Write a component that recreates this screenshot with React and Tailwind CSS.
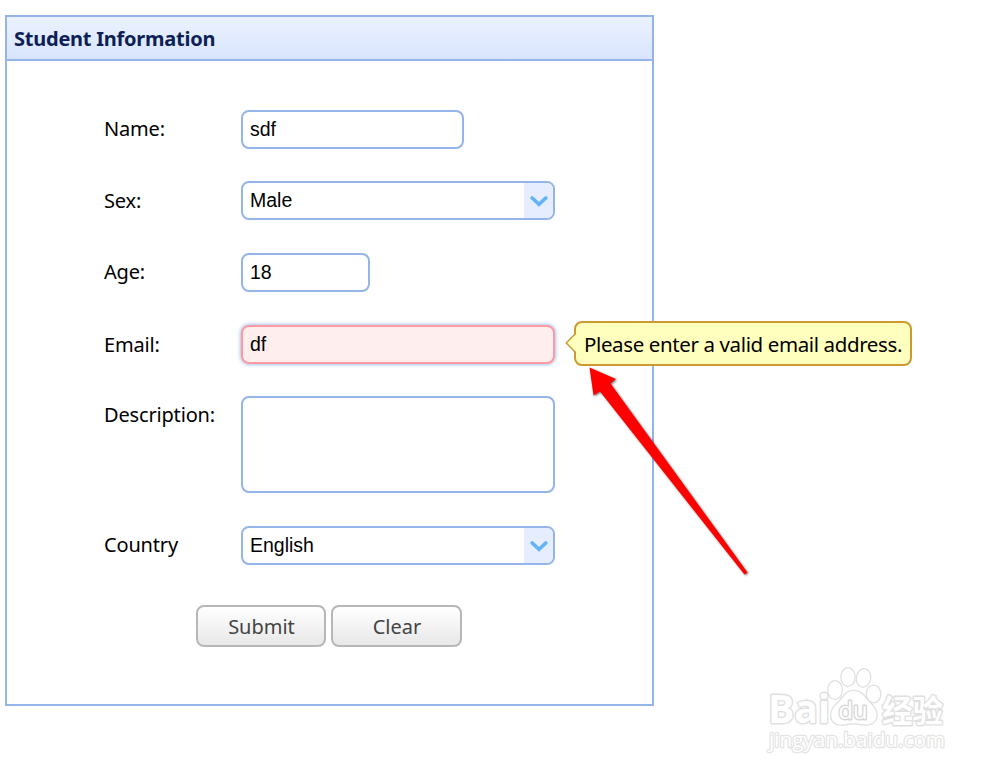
import { useState } from 'react';

const inputClass =
  'block border-2 border-[#94b4ea] rounded-[8px] bg-white pl-[7px] text-[19.5px] text-black font-["Liberation_Sans",Arial,sans-serif] outline-none';

function Row({ label, className = '', labelClass = 'leading-[38px]', children }) {
  return (
    <div className={`flex items-start ${className}`}>
      <label className={`w-[137px] shrink-0 whitespace-nowrap tracking-[-0.17px] ${labelClass}`}>{label}</label>
      {children}
    </div>
  );
}

function Combo({ value }) {
  return (
    <div className={`${inputClass} flex w-[314px] h-[39px] overflow-hidden`}>
      <span className="flex-1 leading-[35px]">{value}</span>
      <button type="button" className="w-[29px] h-full bg-[#e5edfe] flex items-center justify-center">
        <svg width="18" height="12" viewBox="0 0 18 12" fill="none" className="mt-[2px]">
          <path d="M2.2 2 L9 8.4 L15.8 2" stroke="#63b3f5" strokeWidth="3.6" strokeLinecap="round" />
        </svg>
      </button>
    </div>
  );
}

function ErrorTip({ text }) {
  return (
    <div className="absolute left-[333px] -top-[4px] h-[45px] w-[338px] rounded-[8px] border-2 border-[#cc9933] bg-[#ffffbe] pl-[8px] leading-[42px] whitespace-nowrap text-[20.5px] tracking-[-0.38px]">
      <svg width="12" height="22" viewBox="0 0 12 22" className="absolute -left-[11px] top-[9px]">
        <path d="M12 1 L1.5 11 L12 21 Z" fill="#ffffbe" />
        <path d="M10.5 1.5 L1.2 11 L10.5 20.5" fill="none" stroke="#cc9933" strokeWidth="1.4" />
      </svg>
      {text}
    </div>
  );
}

function Arrow() {
  return (
    <svg width="170" height="220" viewBox="585 363 170 220" className="absolute left-[585px] top-[363px] drop-shadow-[1px_1px_1px_rgba(0,0,0,0.55)]">
      <path d="M589.5 367.5 L616 379 L610.5 383.5 L747.5 572.5 L744.5 574.5 L600 391.5 L593.5 395.5 Z" fill="#ff0000" />
    </svg>
  );
}

function Watermark() {
  return (
    <svg width="220" height="110" viewBox="750 655 220 110" className="absolute left-[750px] top-[655px] [paint-order:stroke]" fill="#fff" stroke="#dfdfdf" strokeWidth="2.8" strokeLinejoin="round">
      <text x="768" y="722.5" fontFamily="Open Sans, sans-serif" fontWeight="700" fontSize="39" textLength="62" lengthAdjust="spacingAndGlyphs">Bai</text>
      <g strokeWidth="2.6">
        <ellipse cx="835" cy="690" rx="6.7" ry="8.7" />
        <ellipse cx="848" cy="677" rx="6.5" ry="8.7" />
        <ellipse cx="863.5" cy="678" rx="6.5" ry="8.7" transform="rotate(10 863.5 678)" />
        <ellipse cx="873.5" cy="694" rx="6.7" ry="8.3" />
        <path d="M853.5 691 C845 691 843 699 838 703 C832 708 830 713 832 719 C834 725 841 725 846 724 C851 723 856 723 861 724 C867 725 874 725 876 718 C878 711 873 706 869 702 C864 697 862 691 853.5 691 Z" />
      </g>
      <text x="838.5" y="718.5" fontFamily="Open Sans, sans-serif" fontSize="24" stroke="#d6d6d6" textLength="29" lengthAdjust="spacingAndGlyphs">du</text>
      <text x="882" y="721.5" fontFamily="Noto Sans CJK SC, sans-serif" fontWeight="700" fontSize="31" textLength="61" lengthAdjust="spacingAndGlyphs">经验</text>
      <text x="769" y="747" fontFamily="Open Sans, sans-serif" fontSize="20" stroke="#e4e4e4" strokeWidth="2.4" textLength="176" lengthAdjust="spacingAndGlyphs">jingyan.baidu.com</text>
    </svg>
  );
}

export default function App() {
  const [form, setForm] = useState({ name: 'sdf', age: '18', email: 'df', description: '' });

  const handleChange = (e) => setForm({ ...form, [e.target.name]: e.target.value });

  return (
    <div className='relative h-[775px] w-[1000px] overflow-hidden bg-white pt-[15px] pl-[5px] text-[20px] text-black font-["Noto_Sans",sans-serif]'>
      <div className="w-[649px] h-[691px] border-2 border-[#94b4ea]">
        <h1 className="h-[44px] border-b-2 border-[#94b4ea] bg-gradient-to-b from-[#ebf2ff] to-[#d9e5fd] pl-[7px] text-[20px] tracking-[-0.24px] leading-[43px] font-bold text-[#0e1f55]">
          Student Information
        </h1>

        <form className="pt-[49px] pl-[97px]">
          <Row label="Name:">
            <input name="name" value={form.name} onChange={handleChange} className={`${inputClass} w-[223px] h-[39px]`} />
          </Row>
          <Row label="Sex:" className="mt-[32px]" labelClass="leading-[40px]">
            <Combo value="Male" />
          </Row>
          <Row label="Age:" className="mt-[32px]">
            <input name="age" value={form.age} onChange={handleChange} className={`${inputClass} w-[129px] h-[39px]`} />
          </Row>
          <Row label="Email:" className="mt-[33px]" labelClass="leading-[39px]">
            <div className="relative">
              <input
                name="email"
                value={form.email}
                onChange={handleChange}
                className='block w-[314px] h-[39px] rounded-[8px] border-2 border-[#ff9ba0] bg-[#ffeeee] pl-[7px] text-[19.5px] text-black font-["Liberation_Sans",Arial,sans-serif] outline-none shadow-[0_0_4px_#7ba3e8]'
              />
              <ErrorTip text="Please enter a valid email address." />
            </div>
          </Row>
          <Row label="Description:" className="mt-[32px]" labelClass="leading-[37px]">
            <textarea name="description" value={form.description} onChange={handleChange} className={`${inputClass} w-[314px] h-[97px] resize-none`} />
          </Row>
          <Row label="Country" className="mt-[33px]">
            <Combo value="English" />
          </Row>

          <div className="mt-[40px] ml-[92px] flex gap-[5px] text-[#444]">
            <button type="button" className="w-[130px] h-[42px] rounded-[8px] border-2 border-[#b7b7b7] bg-gradient-to-b from-white to-[#e8e8e8] pt-px pl-px">
              Submit
            </button>
            <button type="button" className="w-[131px] h-[42px] rounded-[8px] border-2 border-[#b7b7b7] bg-gradient-to-b from-white to-[#e8e8e8] pt-px pl-px">
              Clear
            </button>
          </div>
        </form>
      </div>

      <Arrow />
      <Watermark />
    </div>
  );
}
